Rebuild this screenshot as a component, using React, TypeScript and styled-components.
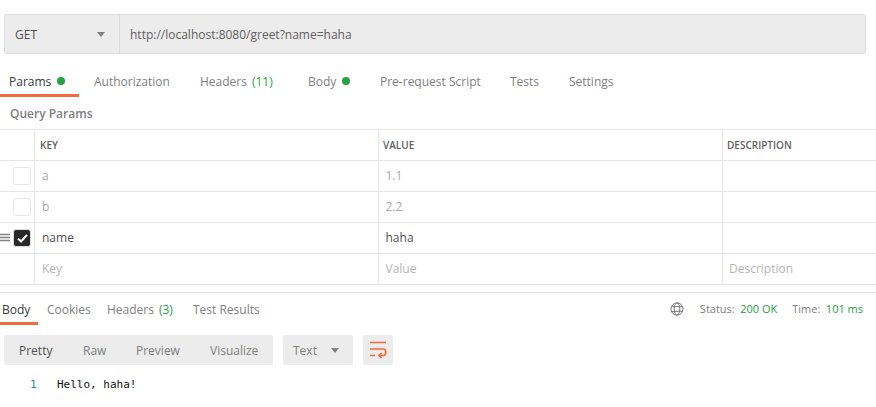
import React from "react";
import styled, { createGlobalStyle } from "styled-components";

const Global = createGlobalStyle`
  html, body { margin: 0; padding: 0; background: #fff; }
  body { font-family: "Open Sans", "Liberation Sans", sans-serif; font-size: 12px; color: #505050; }
`;
const Page = styled.div`width: 876px; height: 407px; overflow: hidden; padding-top: 14px; box-sizing: border-box;`;
const UrlBar = styled.div`
  margin-left: 4px; width: 862px; height: 40px; box-sizing: border-box; display: flex;
  background: #ececec; border: 1px solid #dcdcdc; border-radius: 3px;
`;
const Method = styled.div`
  width: 115px; box-sizing: border-box; padding: 0 14px 0 10px; display: flex; align-items: center;
  justify-content: space-between; border-right: 1px solid #dcdcdc; font-size: 12px; font-weight: 500; color: #505050;
`;
const Caret = styled.span`
  width: 0; height: 0; border-left: 4px solid transparent; border-right: 4px solid transparent;
  border-top: 5px solid #808080;
`;
const Url = styled.div`padding-left: 10px; display: flex; align-items: center; font-size: 12px; color: #606060;`;
const Tabs = styled.div`display: flex; height: 43px; box-sizing: border-box;`;
const Tab = styled.div<{ $w: number; $active?: boolean; $pad: number; $top?: number }>`
  width: ${p => p.$w}px; box-sizing: border-box; padding: ${p => p.$top ?? 19}px 0 0 ${p => p.$pad}px; white-space: nowrap;
  font-size: 12px; line-height: 17px; color: ${p => (p.$active ? "#3a3a3a" : "#808080")};
  display: flex; gap: 5px; align-items: flex-start;
  border-bottom: 3px solid ${p => (p.$active ? "#f26b3a" : "transparent")};
`;
const Dot = styled.span`width: 8px; height: 8px; border-radius: 50%; background: #26a146; margin-top: 4px; margin-left: 1px;`;
const Count = styled.span`color: #26a146;`;
const Section = styled.div`
  height: 32px; box-sizing: border-box; padding: 8px 0 0 10px; font-size: 12px; line-height: 17px; font-weight: 600; color: #808080;
`;
const Table = styled.div`border-top: 1px solid #e6e6e6; border-bottom: 1px solid #e6e6e6;`;
const Row = styled.div<{ $h: number; $last?: boolean }>`
  display: grid; grid-template-columns: 35px 344px 344px 1fr; height: ${p => p.$h}px; box-sizing: border-box;
  border-bottom: ${p => (p.$last ? "0" : "1px solid #e6e6e6")};
`;
const Cell = styled.div<{ $tone?: "on" | "off" | "ph"; $last?: boolean }>`
  display: flex; align-items: center; padding: 0 0 2px 7px; font-size: 12px; box-sizing: border-box;
  color: ${p => (p.$tone === "on" ? "#505050" : p.$tone === "off" ? "#a8a8a8" : "#b5b5b5")};
  border-right: ${p => (p.$last ? "0" : "1px solid #e6e6e6")};
  &:nth-child(3) { padding-left: 6.5px; }
  &:nth-child(4) { padding-left: 6px; }
`;
const HeadCell = styled(Cell)`
  font-size: 10px; font-weight: 600; color: #606060; padding: 0 0 0 5px;
  &:nth-child(n + 3) { padding-left: 4px; }
`;
const CheckCell = styled.div`
  border-right: 1px solid #e6e6e6; display: flex; align-items: center; justify-content: flex-end; padding-right: 3px; position: relative;
`;
const Box = styled.div<{ $on?: boolean }>`
  width: 18px; height: 18px; box-sizing: border-box; border-radius: 3px; display: flex; align-items: center; justify-content: center;
  background: ${p => (p.$on ? "#282828" : "#fff")}; border: 1px solid ${p => (p.$on ? "#dedede" : "#e6e6e6")};
`;
const Grip = styled.svg`position: absolute; left: 0; top: 10px;`;
const Response = styled.div`margin-top: 7px; border-top: 1px solid #e6e6e6;`;
const ResBar = styled.div`display: flex; height: 32px; justify-content: space-between;`;
const ResTabs = styled.div`display: flex;`;
const Status = styled.div`display: flex; align-items: center; padding: 0 13px 0 0; font-size: 11px; color: #808080; height: 30px;`;
const Label = styled.span`margin-right: 5.5px;`;
const Good = styled.span`color: #26a146; margin-right: 15px; &:last-child { margin-right: 0; }`;
const Globe = styled.svg`margin: 2px 16px 0 0;`;
const Toolbar = styled.div`display: flex; gap: 10px; padding: 10px 0 0 4px;`;
const Group = styled.div`
  height: 30px; width: 269px; display: flex; align-items: center; background: #ececec; border-radius: 3px; box-sizing: border-box; padding-left: 15px;
`;
const Mode = styled.span<{ $w: number; $active?: boolean }>`
  width: ${p => p.$w}px; font-size: 12px; color: ${p => (p.$active ? "#505050" : "#808080")};
`;
const Select = styled.div`
  height: 30px; width: 70px; box-sizing: border-box; padding: 0 14px 0 10px; background: #ececec; border-radius: 3px; display: flex; align-items: center;
  justify-content: space-between; font-size: 12px; color: #808080;
`;
const WrapBtn = styled.div`
  width: 30px; height: 30px; background: #ececec; border-radius: 3px; display: flex; align-items: center; justify-content: center;
`;
const Code = styled.div`
  display: flex; padding: 12px 0 0 30px; font-family: "DejaVu Sans Mono", "Liberation Mono", monospace; font-size: 11px; line-height: 15px;
`;
const LineNo = styled.span`width: 27px; color: #1a8fbf; font-size: 11px;`;
const Src = styled.span`color: #111;`;

const Check = () => (
  <svg width="11" height="9" viewBox="0 0 11 9" fill="none">
    <path d="M1 4.5 L4 7.5 L10 1" stroke="#fff" strokeWidth="2" />
  </svg>
);

const rows = [
  { k: "a", v: "1.1", tone: "off" as const, on: false },
  { k: "b", v: "2.2", tone: "off" as const, on: false },
  { k: "name", v: "haha", tone: "on" as const, on: true },
];

export default function App() {
  return (
    <Page>
      <Global />
      <UrlBar>
        <Method>GET<Caret /></Method>
        <Url>http://localhost:8080/greet?name=haha</Url>
      </UrlBar>
      <Tabs>
        <Tab $w={79} $pad={9} $active>Params<Dot /></Tab>
        <Tab $w={106} $pad={15}>Authorization</Tab>
        <Tab $w={108} $pad={15}>Headers<Count>(11)</Count></Tab>
        <Tab $w={87} $pad={15}>Body<Dot /></Tab>
        <Tab $w={130} $pad={0}>Pre-request Script</Tab>
        <Tab $w={59} $pad={0}>Tests</Tab>
        <Tab $w={60} $pad={0}>Settings</Tab>
      </Tabs>
      <Section>Query Params</Section>
      <Table>
        <Row $h={31}>
          <CheckCell />
          <HeadCell>KEY</HeadCell>
          <HeadCell>VALUE</HeadCell>
          <HeadCell $last>DESCRIPTION</HeadCell>
        </Row>
        {rows.map(r => (
          <Row $h={31} key={r.k}>
            <CheckCell>
              {r.on && (
                <Grip width="10" height="10" viewBox="0 0 10 10">
                  <path d="M0 1.5H10M0 4.5H10M0 7.5H10" stroke="#808080" strokeWidth="1.4" />
                </Grip>
              )}
              <Box $on={r.on}>{r.on && <Check />}</Box>
            </CheckCell>
            <Cell $tone={r.tone}>{r.k}</Cell>
            <Cell $tone={r.tone}>{r.v}</Cell>
            <Cell $last />
          </Row>
        ))}
        <Row $h={30} $last>
          <CheckCell />
          <Cell $tone="ph">Key</Cell>
          <Cell $tone="ph">Value</Cell>
          <Cell $tone="ph" $last>Description</Cell>
        </Row>
      </Table>
      <Response>
        <ResBar>
          <ResTabs>
            <Tab $w={38} $pad={2} $top={8} $active>Body</Tab>
            <Tab $w={69} $pad={9} $top={8}>Cookies</Tab>
            <Tab $w={86} $pad={0} $top={8}>Headers<Count>(3)</Count></Tab>
            <Tab $w={70} $pad={0} $top={8}>Test Results</Tab>
          </ResTabs>
          <Status>
            <Globe width="14" height="14" viewBox="0 0 15 15" fill="none" stroke="#707070" strokeWidth="1">
              <circle cx="7.5" cy="7.5" r="6.5" />
              <ellipse cx="7.5" cy="7.5" rx="3" ry="6.5" />
              <path d="M1.3 5H13.7M1.3 10H13.7" />
            </Globe>
            <Label>Status:</Label><Good>200 OK</Good>
            <Label>Time:</Label><Good>101 ms</Good>
          </Status>
        </ResBar>
        <Toolbar>
          <Group>
            <Mode $w={64} $active>Pretty</Mode>
            <Mode $w={53}>Raw</Mode>
            <Mode $w={74}>Preview</Mode>
            <Mode $w={50}>Visualize</Mode>
          </Group>
          <Select>Text<Caret /></Select>
          <WrapBtn>
            <svg width="18" height="18" viewBox="0 0 18 18" fill="none" stroke="#f26b3a" strokeWidth="1.7">
              <path d="M1 1.5H17M1 8H14.5C17.5 8 17.5 14.5 14.5 14.5H10M1 14.5H6" />
              <path d="M12.5 12L10 14.5L12.5 17" />
            </svg>
          </WrapBtn>
        </Toolbar>
        <Code><LineNo>1</LineNo><Src>Hello, haha!</Src></Code>
      </Response>
    </Page>
  );
}
